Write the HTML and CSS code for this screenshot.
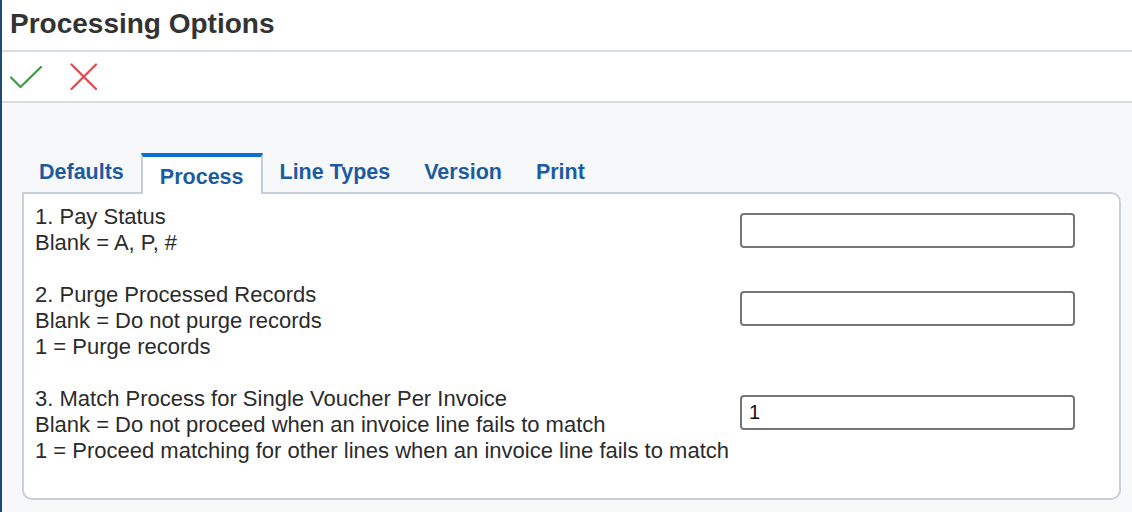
FILE: index.html
```html
<!DOCTYPE html>
<html>
<head>
<meta charset="utf-8">
<link rel="stylesheet" href="styles.css">
</head>
<body>
<div class="page">
  <header class="title-bar">
    <h1 class="title">Processing Options</h1>
  </header>
  <div class="toolbar">
    <button class="tool-btn" aria-label="OK">
      <svg width="34" height="24" viewBox="0 0 34 24"><path d="M1 11.5 L10.5 21 L31 1" fill="none" stroke="#3f9a4a" stroke-width="2.2" stroke-linecap="round" stroke-linejoin="round"/></svg>
    </button>
    <button class="tool-btn" aria-label="Cancel">
      <svg width="28" height="28" viewBox="0 0 28 28"><path d="M1.5 1.5 L26 26 M26 1.5 L1.5 26" fill="none" stroke="#e0464b" stroke-width="2.2" stroke-linecap="round"/></svg>
    </button>
  </div>
  <main class="content">
    <nav class="tabs">
      <div class="tab">Defaults</div>
      <div class="tab active">Process</div>
      <div class="tab">Line Types</div>
      <div class="tab">Version</div>
      <div class="tab">Print</div>
    </nav>
    <section class="panel">
      <div class="row">
        <div class="label">1. Pay Status<br>Blank = A, P, #</div>
        <input class="field" type="text" value="">
      </div>
      <div class="row">
        <div class="label">2. Purge Processed Records<br>Blank = Do not purge records<br>1 = Purge records</div>
        <input class="field" type="text" value="">
      </div>
      <div class="row">
        <div class="label">3. Match Process for Single Voucher Per Invoice<br>Blank = Do not proceed when an invoice line fails to match<br>1 = Proceed matching for other lines when an invoice line fails to match</div>
        <input class="field" type="text" value="1">
      </div>
    </section>
  </main>
</div>
</body>
</html>
```
FILE: styles.css
```css
html, body {
  margin: 0;
  padding: 0;
  height: 100%;
}
body {
  font-family: "Liberation Sans", Arial, sans-serif;
  color: #2b2b2b;
  background: #f6f8fa;
}
.page {
  min-height: 100%;
  border-left: 2px solid #1f4a73;
  box-sizing: border-box;
  display: flex;
  flex-direction: column;
}
.title-bar {
  background: #fff;
  height: 50px;
  border-bottom: 2px solid #d8dde2;
  display: flex;
  align-items: center;
  padding-left: 8px;
}
.title {
  margin: 0;
  font-size: 28px;
  font-weight: bold;
  color: #333;
  line-height: 1;
  padding-bottom: 2px;
}
.toolbar {
  background: #fff;
  height: 49px;
  border-bottom: 2px solid #d8dde2;
  display: flex;
  align-items: center;
  padding-left: 8px;
  gap: 26px;
}
.tool-btn {
  border: 0;
  background: none;
  padding: 0;
  display: flex;
  align-items: center;
  cursor: pointer;
}
.toolbar .tool-btn:first-child {
  padding-top: 2px;
}
.content {
  padding: 50px 11px 0 20px;
}
.tabs {
  display: flex;
  height: 39px;
}
.tab {
  padding: 0 17px;
  display: flex;
  align-items: center;
  font-size: 21.5px;
  font-weight: bold;
  color: #1d5b9f;
}
.tab.active {
  background: #fff;
  border-top: 4px solid #0b6fcf;
  border-left: 2px solid #c5ced8;
  border-right: 2px solid #c5ced8;
  margin-bottom: -2px;
  padding-top: 3px;
  position: relative;
  z-index: 1;
}
.panel {
  background: #fff;
  border: 2px solid #c8d0d9;
  border-radius: 0 10px 10px 10px;
  padding: 10px 44px 8px 11px;
  font-size: 22px;
  line-height: 26px;
}
.row {
  display: flex;
  justify-content: space-between;
  align-items: flex-start;
  margin-bottom: 26px;
}
.field {
  width: 335px;
  height: 35px;
  box-sizing: border-box;
  margin-top: 9px;
  border: 2px solid #767676;
  border-radius: 4px;
  padding: 0 7px;
  font-family: "Liberation Sans", Arial, sans-serif;
  font-size: 20px;
  color: #111;
  background: #fff;
}
```
